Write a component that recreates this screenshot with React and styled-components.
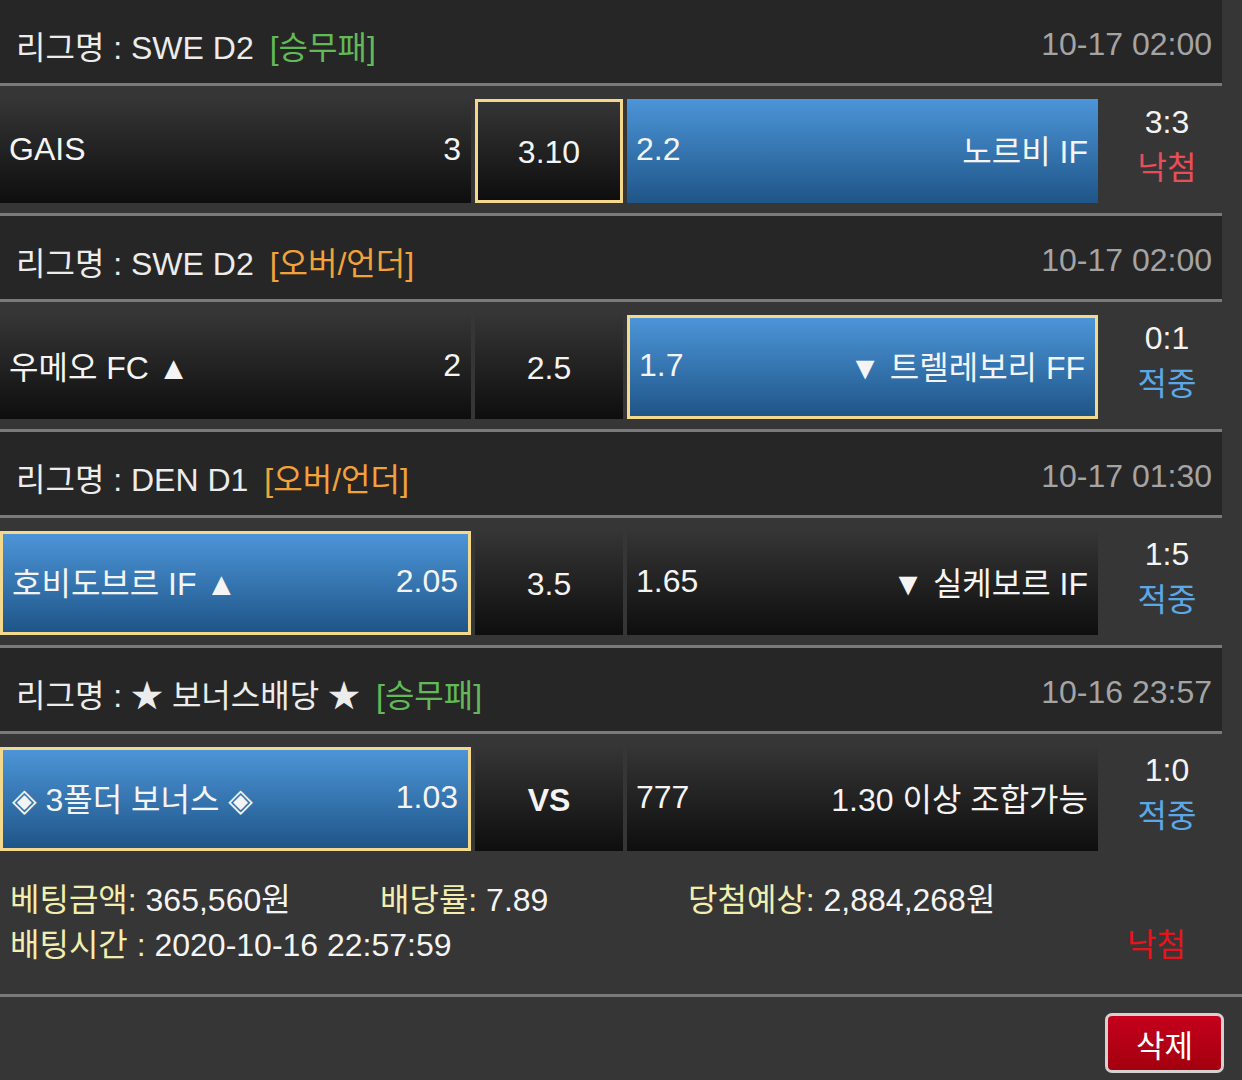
import React from "react"
import styled, { createGlobalStyle, css } from "styled-components"

const GlobalStyle = createGlobalStyle`
  body {
    margin: 0;
    background: #363636;
    font-family: "Liberation Sans", "Noto Sans CJK KR", "DejaVu Sans", sans-serif;
    color: #f2f2f2;
  }
`

const bets = [
  {
    league: "SWE D2",
    type: "[승무패]",
    typeColor: "#62b957",
    time: "10-17 02:00",
    home: "GAIS",
    homeOdds: "3",
    draw: "3.10",
    away: "노르비 IF",
    awayOdds: "2.2",
    picked: "draw",
    won: "away",
    score: "3:3",
    result: "낙첨",
  },
  {
    league: "SWE D2",
    type: "[오버/언더]",
    typeColor: "#f2a23a",
    time: "10-17 02:00",
    home: "우메오 FC ▲",
    homeOdds: "2",
    draw: "2.5",
    away: "▼ 트렐레보리 FF",
    awayOdds: "1.7",
    picked: "away",
    won: "away",
    score: "0:1",
    result: "적중",
  },
  {
    league: "DEN D1",
    type: "[오버/언더]",
    typeColor: "#f2a23a",
    time: "10-17 01:30",
    home: "호비도브르 IF ▲",
    homeOdds: "2.05",
    draw: "3.5",
    away: "▼ 실케보르 IF",
    awayOdds: "1.65",
    picked: "home",
    won: "home",
    score: "1:5",
    result: "적중",
  },
  {
    league: "★ 보너스배당 ★",
    type: "[승무패]",
    typeColor: "#62b957",
    time: "10-16 23:57",
    home: "◈ 3폴더 보너스 ◈",
    homeOdds: "1.03",
    draw: "VS",
    away: "1.30 이상 조합가능",
    awayOdds: "777",
    picked: "home",
    won: "home",
    score: "1:0",
    result: "적중",
  },
]

const App = () => {
  return (
    <Page>
      <GlobalStyle />
      {bets.map((b, i) => (
        <div key={i}>
          <LeagueHeader>
            <LeagueName>
              리그명 : {b.league}
              <BetType color={b.typeColor}>{b.type}</BetType>
            </LeagueName>
            <MatchTime>{b.time}</MatchTime>
          </LeagueHeader>
          <MatchRow last={i === bets.length - 1}>
            <TeamCell blue={b.won === "home"} picked={b.picked === "home"}>
              <span>{b.home}</span>
              <span>{b.homeOdds}</span>
            </TeamCell>
            <DrawCell picked={b.picked === "draw"} bold={b.draw === "VS"}>
              {b.draw}
            </DrawCell>
            <TeamCell blue={b.won === "away"} picked={b.picked === "away"}>
              <span>{b.awayOdds}</span>
              <span>{b.away}</span>
            </TeamCell>
            <ResultCol>
              <Score>{b.score}</Score>
              <Status hit={b.result === "적중"}>{b.result}</Status>
            </ResultCol>
          </MatchRow>
        </div>
      ))}
      <Summary>
        <SummaryLine>
          <SummaryItem width="370px">
            <Label>베팅금액:</Label> 365,560원
          </SummaryItem>
          <SummaryItem width="308px">
            <Label>배당률:</Label> 7.89
          </SummaryItem>
          <SummaryItem>
            <Label>당첨예상:</Label> 2,884,268원
          </SummaryItem>
        </SummaryLine>
        <SummaryLine>
          <SummaryItem>
            <Label>배팅시간 :</Label> 2020-10-16 22:57:59
          </SummaryItem>
          <FinalResult>낙첨</FinalResult>
        </SummaryLine>
      </Summary>
      <ButtonBar>
        <DeleteButton>삭제</DeleteButton>
      </ButtonBar>
    </Page>
  )
}

export default App

const Page = styled.div`
  width: 1242px;
  min-height: 1080px;
  background: #363636;
`

const LeagueHeader = styled.div`
  box-sizing: border-box;
  width: 1222px;
  height: 86px;
  padding: 6px 10px 0 16px;
  display: flex;
  align-items: center;
  justify-content: space-between;
  background: #262626;
  border-bottom: 3px solid #7a7a7a;
`

const LeagueName = styled.div`
  font-size: 32px;
  color: #ececec;
  white-space: pre;
`

const BetType = styled.span`
  margin-left: 16px;
  color: ${(p) => p.color};
`

const MatchTime = styled.div`
  font-size: 32px;
  color: #a4a4a4;
`

const MatchRow = styled.div`
  box-sizing: border-box;
  width: 1222px;
  height: ${(p) => (p.last ? "127px" : "130px")};
  padding: 13px 0 10px;
  display: flex;
  gap: 4px;
  border-bottom: ${(p) => (p.last ? "none" : "3px solid #7a7a7a")};
`

const cellBase = css`
  box-sizing: border-box;
  height: 104px;
  font-size: 32px;
  color: #f4f4f4;
  background: ${(p) =>
    p.blue
      ? "linear-gradient(#4c95d8, #1f5588)"
      : "linear-gradient(#353535, #0e0e0e)"};
  border: ${(p) => (p.picked ? "3px solid #f4d98c" : "none")};
`

const TeamCell = styled.div`
  ${cellBase}
  width: 471px;
  display: flex;
  align-items: center;
  justify-content: space-between;
  padding: 0 10px 4px 9px;
  white-space: pre;
`

const DrawCell = styled.div`
  ${cellBase}
  width: 148px;
  display: flex;
  align-items: center;
  justify-content: center;
  padding-top: 2px;
  font-weight: ${(p) => (p.bold ? 700 : 400)};
`

const ResultCol = styled.div`
  flex: 1;
  margin-left: -4px;
  display: flex;
  flex-direction: column;
  align-items: center;
  justify-content: center;
  padding: 0 0 12px 14px;
  font-size: 32px;
  line-height: 46px;
`

const Score = styled.div`
  color: #f4f4f4;
`

const Status = styled.div`
  color: ${(p) => (p.hit ? "#5ca8e6" : "#ea4d58")};
`

const Summary = styled.div`
  box-sizing: border-box;
  width: 1242px;
  height: 136px;
  padding: 13px 56px 0 10px;
  border-bottom: 3px solid #7a7a7a;
  font-size: 32px;
`

const SummaryLine = styled.div`
  display: flex;
  align-items: center;
  justify-content: space-between;
  height: 45px;
  &:first-child {
    justify-content: flex-start;
  }
`

const SummaryItem = styled.div`
  width: ${(p) => p.width || "auto"};
  color: #f4f4f4;
  white-space: pre;
`

const Label = styled.span`
  color: #f1eeb0;
`

const FinalResult = styled.div`
  color: #e8141c;
`

const ButtonBar = styled.div`
  display: flex;
  justify-content: flex-end;
  padding: 16px 18px 0 0;
`

const DeleteButton = styled.button`
  box-sizing: border-box;
  width: 119px;
  height: 60px;
  border: 3px solid #d6d0d0;
  border-radius: 7px;
  background: linear-gradient(#c5001c, #a3000f);
  color: #fff;
  font-family: "Liberation Sans", "Noto Sans CJK KR", sans-serif;
  font-size: 31px;
  padding: 0;
`
